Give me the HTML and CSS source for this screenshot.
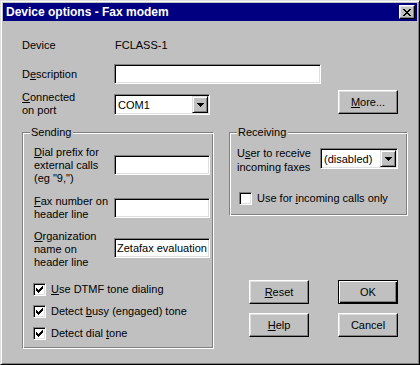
FILE: index.html
```html
<!DOCTYPE html>
<html lang="en">
<head>
  <meta charset="UTF-8" />
  <meta name="viewport" content="width=device-width, initial-scale=1.0"/>
  <title>Device options - Fax modem</title>
  <link rel="stylesheet" href="styles.css">
</head>
<body>
  <div class="window">
    <div class="titlebar">
      <span class="title">Device options - Fax modem</span>
      <button class="close-btn" aria-label="Close">
        <svg width="8" height="7" viewBox="0 0 8 7" shape-rendering="crispEdges"><path d="M0 0h2v1H0z M6 0h2v1H6z M1 1h2v1H1z M5 1h2v1H5z M2 2h4v1H2z M3 3h2v1H3z M2 4h4v1H2z M1 5h2v1H1z M5 5h2v1H5z M0 6h2v1H0z M6 6h2v1H6z"/></svg>
      </button>
    </div>

    <div class="content">
      <div class="row row-device">
        <span class="label">Device</span>
        <span class="value">FCLASS-1</span>
      </div>

      <div class="row row-desc">
        <label class="label">D<u>e</u>scription</label>
        <input class="field field-desc" type="text" value="">
      </div>

      <div class="row row-port">
        <label class="label"><u>C</u>onnected<br>on port</label>
        <div class="combo combo-port">
          <span class="combo-text">COM1</span>
          <span class="combo-arrow">
            <svg width="7" height="4" viewBox="0 0 7 4" shape-rendering="crispEdges"><path d="M0 0h7v1H0z M1 1h5v1H1z M2 2h3v1H2z M3 3h1v1H3z"/></svg>
          </span>
        </div>
        <button class="btn btn-more"><u>M</u>ore...</button>
      </div>

      <div class="groups">
        <!-- Sending -->
        <div class="group group-send">
          <span class="group-title">Sending</span>

          <div class="field-row row-prefix">
            <label class="label"><u>D</u>ial prefix for<br>external calls<br>(eg "9,")</label>
            <input class="field" type="text" value="">
          </div>

          <div class="field-row row-faxnum">
            <label class="label"><u>F</u>ax number on<br>header line</label>
            <input class="field" type="text" value="">
          </div>

          <div class="field-row row-org">
            <label class="label"><u>O</u>rganization<br>name on<br>header line</label>
            <input class="field" type="text" value="Zetafax evaluation">
          </div>

          <div class="checks">
            <div class="check-row">
              <span class="checkbox checked"><svg width="7" height="7" viewBox="0 0 7 7" shape-rendering="crispEdges"><path d="M6 0h1v1H6z M5 1h2v1H5z M0 2h1v1H0z M4 2h3v1H4z M0 3h2v1H0z M3 3h3v1H3z M0 4h5v1H0z M1 5h3v1H1z M2 6h1v1H2z"/></svg></span>
              <span><u>U</u>se DTMF tone dialing</span>
            </div>
            <div class="check-row">
              <span class="checkbox checked"><svg width="7" height="7" viewBox="0 0 7 7" shape-rendering="crispEdges"><path d="M6 0h1v1H6z M5 1h2v1H5z M0 2h1v1H0z M4 2h3v1H4z M0 3h2v1H0z M3 3h3v1H3z M0 4h5v1H0z M1 5h3v1H1z M2 6h1v1H2z"/></svg></span>
              <span>Detect <u>b</u>usy (engaged) tone</span>
            </div>
            <div class="check-row">
              <span class="checkbox checked"><svg width="7" height="7" viewBox="0 0 7 7" shape-rendering="crispEdges"><path d="M6 0h1v1H6z M5 1h2v1H5z M0 2h1v1H0z M4 2h3v1H4z M0 3h2v1H0z M3 3h3v1H3z M0 4h5v1H0z M1 5h3v1H1z M2 6h1v1H2z"/></svg></span>
              <span>Detect dial <u>t</u>one</span>
            </div>
          </div>
        </div>

        <div class="side">
          <!-- Receiving -->
          <div class="group group-recv">
            <span class="group-title">Receiving</span>
            <div class="field-row row-user">
              <label class="label">U<u>s</u>er to receive<br>incoming faxes</label>
              <div class="combo combo-user">
                <span class="combo-text">(disabled)</span>
                <span class="combo-arrow">
                  <svg width="7" height="4" viewBox="0 0 7 4" shape-rendering="crispEdges"><path d="M0 0h7v1H0z M1 1h5v1H1z M2 2h3v1H2z M3 3h1v1H3z"/></svg>
                </span>
              </div>
            </div>
            <div class="check-row check-incoming">
              <span class="checkbox"></span>
              <span>Use for <u>i</u>ncoming calls only</span>
            </div>
          </div>

          <div class="buttons">
            <button class="btn"><u>R</u>eset</button>
            <button class="btn btn-default">OK</button>
            <button class="btn"><u>H</u>elp</button>
            <button class="btn">Cancel</button>
          </div>
        </div>
      </div>
    </div>
  </div>
</body>
</html>
```

FILE: styles.css
```css
:root {
  --face: #c0c0c0;
  --light: #dfdfdf;
  --shadow: #808080;
  --title: #000080;
}

* {
  box-sizing: border-box;
  margin: 0;
  padding: 0;
}

body {
  background: var(--face);
  font-family: "Liberation Sans", Arial, sans-serif;
  font-size: 11px;
  color: #000;
}

u {
  text-decoration: underline;
  text-underline-offset: 1px;
}

/* window frame */
.window {
  width: 420px;
  height: 365px;
  background: var(--face);
  border: 1px solid;
  border-color: var(--light) #000 #000 var(--light);
  box-shadow: inset 1px 1px #fff, inset -1px -1px var(--shadow);
  padding: 2px;
  display: flex;
  flex-direction: column;
}

.titlebar {
  height: 18px;
  background: var(--title);
  color: #fff;
  display: flex;
  align-items: center;
  justify-content: space-between;
  padding: 0 2px 0 3px;
}

.title {
  font-weight: bold;
  font-size: 12px;
}

.close-btn {
  width: 16px;
  height: 14px;
  background: var(--face);
  border: 1px solid;
  border-color: #fff #000 #000 #fff;
  box-shadow: inset -1px -1px var(--shadow), inset 1px 1px var(--light);
  display: flex;
  align-items: center;
  justify-content: center;
}

.content {
  flex: 1;
  padding: 14px 9px 0 19px;
}

.row {
  display: flex;
  align-items: flex-start;
}

.row .label {
  width: 92px;
  flex: none;
  line-height: 13px;
}

.row-device {
  height: 20px;
  align-items: center;
}

.row-device .value {
  padding-left: 1px;
}

.row-desc {
  margin-top: 9px;
  height: 20px;
  align-items: center;
}

.row-port {
  margin-top: 6px;
  height: 26px;
}

.row-port .label {
  padding-top: 1px;
}

/* sunken edit field */
.field {
  width: 96px;
  height: 20px;
  background: #fff;
  border: 1px solid;
  border-color: var(--shadow) #fff #fff var(--shadow);
  box-shadow: inset 1px 1px #000, inset -1px -1px var(--light);
  font: inherit;
  color: #000;
  padding: 0 2px;
  outline: none;
}

.field-desc {
  width: 207px;
}

/* combo box */
.combo {
  height: 21px;
  background: #fff;
  border: 1px solid;
  border-color: var(--shadow) #fff #fff var(--shadow);
  box-shadow: inset 1px 1px #000, inset -1px -1px var(--light);
  padding: 1px;
  display: flex;
  align-items: stretch;
}

.combo-text {
  flex: 1;
  padding-left: 2px;
  display: flex;
  align-items: center;
}

.combo-arrow {
  width: 16px;
  background: var(--face);
  border: 1px solid;
  border-color: var(--light) #000 #000 var(--light);
  box-shadow: inset 1px 1px #fff, inset -1px -1px var(--shadow);
  display: flex;
  align-items: center;
  justify-content: center;
}

.combo-port {
  width: 96px;
  margin-top: 4px;
}

.combo-user {
  width: 78px;
  margin-top: 2px;
}

/* buttons */
.btn {
  width: 60px;
  height: 24px;
  background: var(--face);
  border: 1px solid;
  border-color: #fff #000 #000 #fff;
  box-shadow: inset -1px -1px var(--shadow), inset 1px 1px var(--light);
  font: inherit;
  color: #000;
}

.btn-default {
  border-color: #000;
  box-shadow: inset 1px 1px #fff, inset -1px -1px #000, inset -2px -2px var(--shadow);
}

.btn-more {
  margin-left: auto;
  margin-right: 10px;
}

/* group boxes */
.groups {
  margin-top: 16px;
  display: flex;
  gap: 15px;
}

.group {
  position: relative;
  border: 1px solid;
  border-color: var(--shadow) #fff #fff var(--shadow);
  box-shadow: inset 1px 1px #fff, inset -1px -1px var(--shadow);
}

.group-title {
  position: absolute;
  top: -7px;
  left: 7px;
  padding: 0 2px 0 1px;
  background: var(--face);
  line-height: 13px;
}

.group-send {
  width: 192px;
  height: 217px;
  padding: 13px 0 0 11px;
}

.field-row {
  display: flex;
  align-items: flex-start;
}

.field-row .label {
  flex: none;
  line-height: 13px;
}

.group-send .label {
  width: 80px;
}

.row-prefix .field {
  margin-top: 9px;
}

.row-faxnum {
  margin-top: 10px;
}

.row-faxnum .field {
  margin-top: 3px;
}

.row-org {
  margin-top: 9px;
}

.row-org .field {
  margin-top: 8px;
}

.checks {
  margin-top: 9px;
  margin-left: -1px;
}

.check-row {
  height: 22px;
  display: flex;
  align-items: center;
  gap: 5px;
}

.checkbox {
  width: 13px;
  height: 13px;
  flex: none;
  background: #fff;
  border: 1px solid;
  border-color: var(--shadow) #fff #fff var(--shadow);
  box-shadow: inset 1px 1px #000, inset -1px -1px var(--light);
  display: flex;
  align-items: center;
  justify-content: center;
}

.side {
  width: 179px;
}

.group-recv {
  height: 84px;
  padding: 13px 0 0 7px;
}

.group-recv .label {
  width: 83px;
  line-height: 14px;
}

.check-incoming {
  margin-top: 13px;
  margin-left: 2px;
}

.buttons {
  margin: 64px 0 0 20px;
  display: grid;
  grid-template-columns: 60px 60px;
  column-gap: 29px;
  row-gap: 9px;
}
```
